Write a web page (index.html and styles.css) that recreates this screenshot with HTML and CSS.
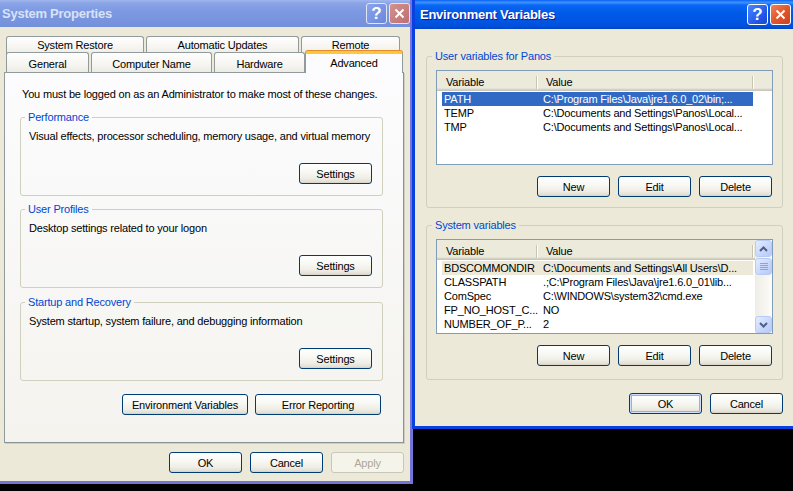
FILE: index.html
```html
<!DOCTYPE html>
<html lang="en">
<head>
<meta charset="utf-8">
<title>System Properties</title>
<link rel="stylesheet" href="styles.css">
</head>
<body>
<div class="desktop">

  <section class="win win-sys">
    <header class="titlebar tb-inactive">
      <span class="title">System Properties</span>
      <div class="tbtns">
        <span class="tbtn help">?</span>
        <span class="tbtn close"><svg width="11" height="11" viewBox="0 0 11 11"><path d="M1.5 1.5L9.5 9.5M9.5 1.5L1.5 9.5" stroke="#fff" stroke-width="2"/></svg></span>
      </div>
    </header>
    <div class="client sys-client">
      <div class="tabs">
        <div class="tabrow row1">
          <span class="tab t-restore">System Restore</span>
          <span class="tab t-updates">Automatic Updates</span>
          <span class="tab t-remote">Remote</span>
        </div>
        <div class="tabrow row2">
          <span class="tab t-general">General</span>
          <span class="tab t-compname">Computer Name</span>
          <span class="tab t-hardware">Hardware</span>
          <span class="tab t-advanced">Advanced</span>
        </div>
      </div>
      <div class="panel">
        <p class="note">You must be logged on as an Administrator to make most of these changes.</p>
        <fieldset class="group sgroup">
          <legend>Performance</legend>
          <p>Visual effects, processor scheduling, memory usage, and virtual memory</p>
          <div class="btnrow"><button class="btn">Settings</button></div>
        </fieldset>
        <fieldset class="group sgroup g-profiles">
          <legend>User Profiles</legend>
          <p>Desktop settings related to your logon</p>
          <div class="btnrow"><button class="btn">Settings</button></div>
        </fieldset>
        <fieldset class="group sgroup g-startup">
          <legend>Startup and Recovery</legend>
          <p>System startup, system failure, and debugging information</p>
          <div class="btnrow"><button class="btn">Settings</button></div>
        </fieldset>
        <div class="panel-btns">
          <button class="btn wide">Environment Variables</button>
          <button class="btn wide">Error Reporting</button>
        </div>
      </div>
      <div class="dlg-btns sys-btns">
        <button class="btn">OK</button>
        <button class="btn">Cancel</button>
        <button class="btn" disabled>Apply</button>
      </div>
    </div>
  </section>

  <section class="win win-env">
    <header class="titlebar tb-active">
      <span class="title">Environment Variables</span>
      <div class="tbtns">
        <span class="tbtn help">?</span>
        <span class="tbtn close"><svg width="11" height="11" viewBox="0 0 11 11"><path d="M1.5 1.5L9.5 9.5M9.5 1.5L1.5 9.5" stroke="#fff" stroke-width="2"/></svg></span>
      </div>
    </header>
    <div class="client env-client">
      <fieldset class="group egroup">
        <legend>User variables for Panos</legend>
        <div class="listview">
          <div class="lv-main">
            <div class="lv-head">
              <span class="hc hc1">Variable</span><span class="hsep"></span>
              <span class="hc hc2">Value</span><span class="hsep"></span>
            </div>
            <div class="lv-body">
              <div class="lv-row sel"><span class="c1">PATH</span><span class="c2">C:\Program Files\Java\jre1.6.0_02\bin;...</span></div>
              <div class="lv-row"><span class="c1">TEMP</span><span class="c2">C:\Documents and Settings\Panos\Local...</span></div>
              <div class="lv-row"><span class="c1">TMP</span><span class="c2">C:\Documents and Settings\Panos\Local...</span></div>
            </div>
          </div>
        </div>
        <div class="btnrow lv-btns">
          <button class="btn">New</button>
          <button class="btn">Edit</button>
          <button class="btn">Delete</button>
        </div>
      </fieldset>

      <fieldset class="group egroup g-sysvars">
        <legend>System variables</legend>
        <div class="listview">
          <div class="lv-main">
            <div class="lv-head">
              <span class="hc hc1">Variable</span><span class="hsep"></span>
              <span class="hc hc2">Value</span><span class="hsep"></span>
            </div>
            <div class="lv-body">
              <div class="lv-row dim"><span class="c1">BDSCOMMONDIR</span><span class="c2">C:\Documents and Settings\All Users\D...</span></div>
              <div class="lv-row"><span class="c1">CLASSPATH</span><span class="c2">.;C:\Program Files\Java\jre1.6.0_01\lib...</span></div>
              <div class="lv-row"><span class="c1">ComSpec</span><span class="c2">C:\WINDOWS\system32\cmd.exe</span></div>
              <div class="lv-row"><span class="c1">FP_NO_HOST_C...</span><span class="c2">NO</span></div>
              <div class="lv-row"><span class="c1">NUMBER_OF_P...</span><span class="c2">2</span></div>
            </div>
          </div>
          <div class="scrollbar">
            <span class="sb-btn"><svg width="9" height="6" viewBox="0 0 9 6"><path d="M1 5L4.5 1.5L8 5" fill="none" stroke="#4d6185" stroke-width="2"/></svg></span>
            <span class="sb-btn sb-thumb"><svg width="8" height="7" viewBox="0 0 8 7"><path d="M0 0.5H8M0 2.5H8M0 4.5H8M0 6.5H8" stroke="#8ca2e0" stroke-width="1"/></svg></span>
            <span class="sb-track"></span>
            <span class="sb-btn"><svg width="9" height="6" viewBox="0 0 9 6"><path d="M1 1L4.5 4.5L8 1" fill="none" stroke="#4d6185" stroke-width="2"/></svg></span>
          </div>
        </div>
        <div class="btnrow lv-btns">
          <button class="btn">New</button>
          <button class="btn">Edit</button>
          <button class="btn">Delete</button>
        </div>
      </fieldset>

      <div class="dlg-btns env-btns">
        <button class="btn default">OK</button>
        <button class="btn">Cancel</button>
      </div>
    </div>
  </section>

</div>
</body>
</html>
```
FILE: styles.css
```css
* { box-sizing: border-box; }

html, body {
  margin: 0;
  padding: 0;
  background: #000;
}

body {
  font-family: "Liberation Sans", Arial, sans-serif;
  font-size: 11px;
  letter-spacing: -0.18px;
  color: #000;
}

.desktop {
  position: relative;
  width: 793px;
  height: 491px;
  overflow: hidden;
  background: #000;
}

/* ---------- windows ---------- */
.win {
  position: absolute;
  top: 0;
  display: flex;
  flex-direction: column;
  background: #ece9d8;
}

.win-sys {
  left: -4px;
  width: 417px;
  height: 484px;
  border: 3px solid #7474d8;
  border-left-width: 4px;
  border-top: 0;
  z-index: 1;
}

.win-env {
  left: 412px;
  width: 384px;
  height: 429px;
  border: 3px solid #0a3fe0;
  border-top: 0;
  z-index: 2;
}

/* ---------- title bars ---------- */
.titlebar {
  display: flex;
  align-items: center;
  justify-content: space-between;
  flex: none;
}

.title {
  font-family: "Liberation Sans", Arial, sans-serif;
  font-weight: bold;
  font-size: 13px;
  letter-spacing: -0.25px;
  white-space: nowrap;
}

.tb-inactive {
  height: 27px;
  padding-left: 2px;
  background: linear-gradient(#a0b6ee 0%, #8aa4e6 12%, #7d99e1 40%, #7894de 75%, #7390dc 100%);
}
.tb-inactive .title { color: #d8e2f8; }

.tb-active {
  height: 29px;
  padding: 0 2px 0 5px;
  background: linear-gradient(#0a62f4 0%, #3d92ff 8%, #0a66f6 18%, #005ae8 45%, #0055e3 75%, #004fd8 92%, #0044c0 100%);
}
.tb-active .title {
  color: #fff;
  text-shadow: 1px 1px 0 #0a2090;
}

.tbtns {
  display: flex;
  gap: 2px;
}

.tbtn {
  width: 21px;
  height: 21px;
  border-radius: 3px;
  display: flex;
  align-items: center;
  justify-content: center;
  color: #fff;
  font-family: "Liberation Sans", Arial, sans-serif;
  font-weight: bold;
  font-size: 17px;
  letter-spacing: 0;
  line-height: 1;
}

.tb-inactive .tbtn { border: 1px solid #dfe6f8; }
.tb-inactive .help { background: linear-gradient(135deg, #8aa4ea, #6a87dc); }
.tb-inactive .close { background: linear-gradient(135deg, #d4928e, #bd6f72); }

.tb-active .tbtn { border: 1px solid #fff; }
.tb-active .help { background: linear-gradient(135deg, #4a86ff, #1f55e6 70%, #1a48cc); }
.tb-active .close { background: linear-gradient(135deg, #f0825a, #e0572e 50%, #c8431e); }

/* ---------- system properties client ---------- */
.sys-client {
  flex: 1;
  display: flex;
  flex-direction: column;
  padding-top: 9px;
}

.tabs {
  display: flex;
  flex-direction: column;
  margin-left: 6px;
}

.tabrow {
  display: flex;
  gap: 2px;
}

.row1 { height: 18px; }
.row1 .tab { height: 18px; border-bottom: 0; padding-bottom: 1px; }

.row2 {
  height: 20px;
  margin-top: -2px;
  align-items: flex-end;
}
.row2 .tab { height: 20px; padding-top: 2px; }

.tab {
  display: flex;
  align-items: center;
  justify-content: center;
  white-space: nowrap;
  border: 1px solid #919b9c;
  border-bottom: 0;
  border-radius: 3px 3px 0 0;
  background: linear-gradient(#fefefe, #f6f5f1 60%, #ecebe5);
  color: #000;
}

.t-restore { width: 138px; }
.t-updates { width: 153px; }
.t-remote { width: 99px; }
.t-general { width: 83px; }
.t-compname { width: 121px; }
.t-hardware { width: 91px; }

.row2 .t-advanced {
  position: relative;
  z-index: 1;
  width: 98px;
  height: 22px;
  margin-left: -2px;
  margin-bottom: -1px;
  padding-top: 0;
  padding-bottom: 2px;
  background: #fcfcfe;
  border-top: 3px solid #ffc83c;
  box-shadow: 0 -1px 0 #e68b2c;
}

.panel {
  margin-left: 4px;
  width: 400px;
  height: 371px;
  border: 1px solid #919b9c;
  border-right-color: #8a9394;
  border-bottom-color: #8a9394;
  box-shadow: 1px 1px 0 #d0cec4;
  background: linear-gradient(#fcfcfe, #f4f3ee);
  padding: 15px 20px 0 15px;
  display: flex;
  flex-direction: column;
}

.note {
  margin: 0 0 0 2px;
  line-height: 13px;
  white-space: nowrap;
}

.group {
  margin: 0;
  min-width: 0;
  border: 1px solid #d0d0bf;
  border-radius: 3px;
}

.group legend {
  color: #0046d5;
  line-height: 14px;
  padding: 0 3px;
  margin-left: -4px;
  white-space: nowrap;
}

.sgroup {
  margin-top: 9px;
  padding: 6px 10px 11px 8px;
}
.sgroup p {
  margin: 0;
  line-height: 13px;
  white-space: nowrap;
}
.sgroup .btnrow { margin-top: 20px; }
.g-profiles { margin-top: 6px; }
.g-startup { margin-top: 7px; }

.btnrow {
  display: flex;
  justify-content: flex-end;
  gap: 8px;
}

.panel-btns {
  display: flex;
  justify-content: flex-end;
  gap: 7px;
  margin-top: 13px;
  padding-right: 2px;
}

.dlg-btns {
  display: flex;
  justify-content: flex-end;
  gap: 8px;
}

.sys-btns {
  margin-top: 9px;
  padding-right: 6px;
}

/* ---------- buttons ---------- */
.btn {
  width: 73px;
  height: 21px;
  padding: 0;
  font-family: "Liberation Sans", Arial, sans-serif;
  font-size: 11px;
  letter-spacing: inherit;
  color: #000;
  border: 1px solid #003c74;
  border-radius: 3px;
  background: linear-gradient(#ffffff 0%, #f7f7f3 45%, #efede5 75%, #e3e0d5 92%, #d6d0c5 100%);
}

.btn.wide { width: 126px; }

.btn.default {
  box-shadow: inset 0 0 0 1px #cee0fc, inset 0 0 0 2px #8fb2ec;
}

.btn:disabled {
  color: #aca899;
  border-color: #c9c7ba;
  background: #f5f4ea;
}

/* ---------- environment variables client ---------- */
.env-client {
  flex: 1;
  display: flex;
  flex-direction: column;
  padding: 20px 10px 0 11px;
}

.egroup {
  padding: 7px 9px 10px 9px;
}
.g-sysvars {
  margin-top: 10px;
  padding-bottom: 13px;
}

.lv-btns {
  margin-top: 11px;
  padding-right: 1px;
}

.env-btns {
  margin-top: 13px;
  gap: 8px;
}

.listview {
  width: 337px;
  height: 95px;
  border: 1px solid #7f9db9;
  background: #fff;
  display: flex;
}

.lv-main {
  flex: 1;
  display: flex;
  flex-direction: column;
  min-width: 0;
}

.lv-head {
  height: 20px;
  display: flex;
  align-items: center;
  background: #ebeadb;
  box-shadow: inset 0 -1px 0 #cbc7b8, inset 0 -2px 0 #d6d2c2, inset 0 -3px 0 #e2e2da;
  padding-top: 2px;
}

.hc { padding-left: 9px; }
.hc1 { width: 99px; }
.hc2 { width: 214px; padding-left: 8px; }

.hsep {
  width: 2px;
  height: 13px;
  border-left: 1px solid #c7c5b2;
  border-right: 1px solid #fff;
}

.lv-body {
  padding-top: 1px;
}

.lv-row {
  display: flex;
  width: 311px;
  height: 14px;
  line-height: 14px;
  margin-left: 5px;
  white-space: nowrap;
}

.lv-row .c1 {
  width: 94px;
  flex: none;
  padding-left: 2px;
}
.lv-row .c2 {
  padding-left: 7px;
}

.lv-row.sel {
  background: #316ac5;
  color: #fff;
}

.lv-row.dim {
  background: #ece9d8;
}

/* ---------- scrollbar ---------- */
.scrollbar {
  width: 17px;
  display: flex;
  flex-direction: column;
  background: linear-gradient(to right, #eeede5, #f6f5f0 60%, #fdfdfa);
}

.sb-btn {
  height: 17px;
  flex: none;
  display: flex;
  align-items: center;
  justify-content: center;
  border: 1px solid #b8cbf6;
  border-radius: 3px;
  background: linear-gradient(135deg, #e4ecfe, #c6d6fc 60%, #b6c9f7);
}

.sb-thumb {
  margin-top: 1px;
}

.sb-track { flex: 1; }
```
